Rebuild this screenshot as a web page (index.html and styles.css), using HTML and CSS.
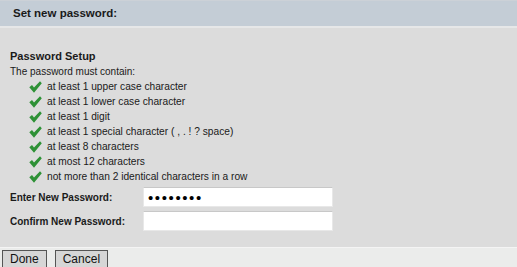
FILE: index.html
```html
<!DOCTYPE html>
<html lang="en">
<head>
    <meta charset="UTF-8">
    <meta name="viewport" content="width=device-width, initial-scale=1.0">
    <title>Set new password</title>
    <link rel="stylesheet" href="styles.css">
</head>
<body>
    <div class="header">Set new password:</div>
    <div class="content">
        <h2 class="section-title">Password Setup</h2>
        <p class="intro">The password must contain:</p>
        <ul class="rules">
            <li><svg class="check" viewBox="0 0 13 12"><path d="M0.3 6.3 L3 4 L5 6.6 L11 0.3 L12.8 2.2 L5 11.7 Z"/></svg>at least 1 upper case character</li>
            <li><svg class="check" viewBox="0 0 13 12"><path d="M0.3 6.3 L3 4 L5 6.6 L11 0.3 L12.8 2.2 L5 11.7 Z"/></svg>at least 1 lower case character</li>
            <li><svg class="check" viewBox="0 0 13 12"><path d="M0.3 6.3 L3 4 L5 6.6 L11 0.3 L12.8 2.2 L5 11.7 Z"/></svg>at least 1 digit</li>
            <li><svg class="check" viewBox="0 0 13 12"><path d="M0.3 6.3 L3 4 L5 6.6 L11 0.3 L12.8 2.2 L5 11.7 Z"/></svg>at least 1 special character ( , . ! ? space)</li>
            <li><svg class="check" viewBox="0 0 13 12"><path d="M0.3 6.3 L3 4 L5 6.6 L11 0.3 L12.8 2.2 L5 11.7 Z"/></svg>at least 8 characters</li>
            <li><svg class="check" viewBox="0 0 13 12"><path d="M0.3 6.3 L3 4 L5 6.6 L11 0.3 L12.8 2.2 L5 11.7 Z"/></svg>at most 12 characters</li>
            <li><svg class="check" viewBox="0 0 13 12"><path d="M0.3 6.3 L3 4 L5 6.6 L11 0.3 L12.8 2.2 L5 11.7 Z"/></svg>not more than 2 identical characters in a row</li>
        </ul>
        <div class="field">
            <label for="newPass">Enter New Password:</label>
            <input type="password" id="newPass" value="abcdefgh">
        </div>
        <div class="field">
            <label for="confirmPass">Confirm New Password:</label>
            <input type="password" id="confirmPass">
        </div>
    </div>
    <div class="footer">
        <button>Done</button>
        <button>Cancel</button>
    </div>
</body>
</html>
```

FILE: styles.css
```css
body {
    margin: 0;
    font-family: "Liberation Sans", Arial, sans-serif;
    color: #1a1a1a;
    background: #ebeceb;
}
.header {
    height: 25px;
    line-height: 25px;
    padding-left: 13px;
    background: #c4cdd6;
    border-top: 1px solid #ccd1d7;
    border-bottom: 2px solid #e6e7e8;
    font-size: 11.5px;
    font-weight: bold;
}
.content {
    background: #dcdcdc;
    padding: 21px 10px 16px;
    height: 182px;
}
.section-title {
    margin: 0;
    font-size: 11px;
    line-height: 14px;
}
.intro {
    margin: 2px 0 0;
    font-size: 10px;
    line-height: 14px;
}
.rules {
    list-style: none;
    margin: 0;
    padding: 0 0 0 19px;
}
.rules li {
    display: flex;
    align-items: center;
    height: 15px;
    font-size: 10.2px;
}
.check {
    width: 13px;
    height: 12px;
    margin-right: 5px;
    fill: #2e9136;
}
.field {
    display: flex;
    align-items: center;
    margin-top: 4px;
}
.field:first-of-type {
    margin-top: 3px;
}
.field label {
    width: 133px;
    font-size: 10px;
    font-weight: bold;
}
.field input {
    box-sizing: border-box;
    width: 190px;
    height: 20px;
    padding: 0 4px;
    border: 1px solid #e8e8e8;
    border-top: 1px solid #c8c8c8;
    background: #fff;
    font-size: 15px;
    letter-spacing: 1.6px;
    color: #000;
}
.footer {
    border-top: 1px solid #f4f4f4;
    padding: 2px 2px 0;
    display: flex;
    gap: 8px;
}
.footer button {
    font-family: "Liberation Sans", Arial, sans-serif;
    font-size: 12px;
    padding: 1px 7px;
    background: #d6d6d6;
    border: 1px solid #555;
    border-radius: 0;
    color: #111;
}
```
